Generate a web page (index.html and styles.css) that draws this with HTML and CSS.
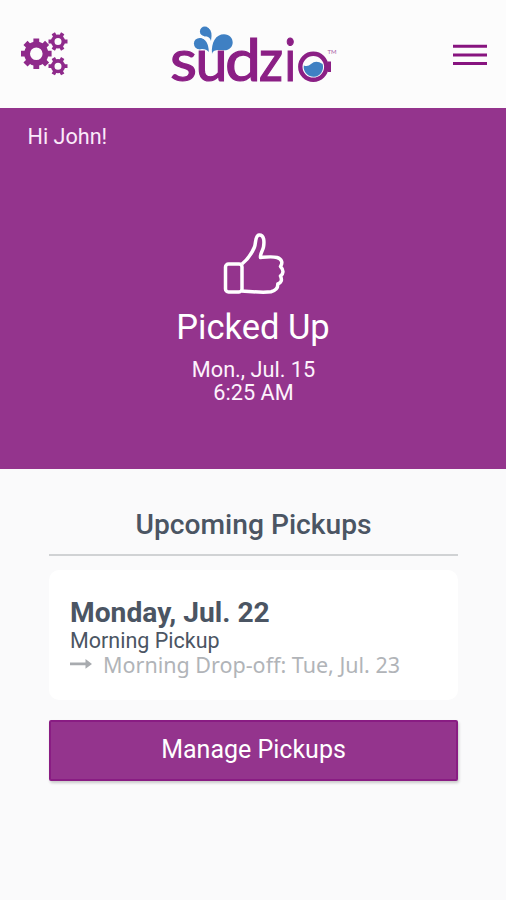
FILE: index.html
```html
<!DOCTYPE html>
<html lang="en">
<head>
<meta charset="utf-8">
<title>Sudzio</title>
<link rel="stylesheet" href="styles.css">
</head>
<body>
<header class="topbar">
  <svg class="gears" viewBox="0 0 50 46" aria-label="Settings">
    <defs>
      <g id="gear-large">
        <circle r="9.200" fill="none" stroke-width="5.800"/>
        <path d="M0-15.300V-10M0 15.300V10M-15.300 0H-10M15.300 0H10M-10.800-10.800L-7-7M10.800 10.800L7 7M-10.800 10.800L-7 7M10.800-10.800L7-7" stroke-width="5.800"/>
      </g>
      <g id="gear-small">
        <circle r="5.300" fill="none" stroke-width="3.600"/>
        <path d="M-9.500 0H-6M9.500 0H6M-4.700-8.200L-3-5.200M4.700 8.200L3 5.200M-4.700 8.200L-3 5.200M4.700-8.200L3-5.200" stroke-width="3.800"/>
      </g>
    </defs>
    <use href="#gear-large" x="16.3" y="23.7"/>
    <use href="#gear-small" x="38" y="11.5"/>
    <use href="#gear-small" x="38" y="36.2"/>
  </svg>
  <svg class="logo" viewBox="170 20 168 68" aria-label="sudzio">
    <g class="wordmark">
      <text x="170" y="81.300" textLength="27" lengthAdjust="spacingAndGlyphs">s</text>
      <text x="195.500" y="81.300" textLength="32" lengthAdjust="spacingAndGlyphs">u</text>
      <text x="225" y="81.300" textLength="36" lengthAdjust="spacingAndGlyphs">d</text>
      <text x="259" y="81.300" textLength="24" lengthAdjust="spacingAndGlyphs">z</text>
      <text x="284.500" y="81.300" textLength="11.500" lengthAdjust="spacingAndGlyphs">i</text>
    </g>
    <g class="water">
      <circle cx="204.800" cy="31.400" r="4.900"/>
      <path d="M208 27.800Q213 31 211 41Q210 36 204 36.200Z"/>
      <circle cx="199.600" cy="43.600" r="5.700"/>
      <path d="M200 38Q208.500 39 208.800 52Q206 48 199 49.200Z"/>
      <path d="M212 54C211 42 216 34.200 224 34.200C229.500 34.200 232.700 38 232.700 42.500C232.700 47 229 50.500 224 50.300C218 50 213.500 49 212 54Z"/>
    </g>
    <circle cx="313.300" cy="66.800" r="13" fill="none" stroke="#8b1f85" stroke-width="4.400"/>
    <path d="M327.500 61.500H331V72H327.500Z" fill="#8b1f85"/>
    <path class="water" d="M303.800 65.500Q308 67 311 64Q316 59.500 322.600 64A9.700 9.700 0 1 1 303.800 65.500Z"/>
    <text class="tm" x="327.500" y="54">TM</text>
  </svg>
  <svg class="menu" viewBox="0 0 34 22" aria-label="Menu">
    <path d="M0 2.300H34M0 11H34M0 19.400H34"/>
  </svg>
</header>
<section class="status">
  <p class="greeting">Hi John!</p>
  <svg class="thumb" viewBox="0 0 62 64">
    <rect x="2.500" y="32" width="16.500" height="28" rx="3"/>
    <path d="M19 32C24 28 29 21 31.500 15C33 11 32 3.500 36 3C41 2.500 41.500 9 40.500 15C39.800 19 37 21 37.500 25.500C43 25 49 24.200 54 25.500C59 27 60 31 57.500 34.500C61 38 60.500 42 57.500 44C59.500 48 58 51 54.800 52C55 56 52.500 58.500 48 59.700C39 61 28 59.500 19 59"/>
  </svg>
  <h1 class="state">Picked Up</h1>
  <p class="when"><span class="day">Mon., Jul. 15</span><span class="time">6:25 AM</span></p>
</section>
<main class="upcoming">
  <h2 class="heading"><span>Upcoming Pickups</span></h2>
  <article class="card">
    <h3 class="date"><span>Monday, Jul. 22</span></h3>
    <p class="slot"><span>Morning Pickup</span></p>
    <p class="dropoff">
      <svg class="arrow" viewBox="0 0 22 12"><path d="M0 4.500H15.500V1L22 5.900L15.500 10.800V7.300H0Z"/></svg>
      <span>Morning Drop-off: Tue, Jul. 23</span>
    </p>
  </article>
  <button class="manage">Manage Pickups</button>
</main>
</body>
</html>
```
FILE: styles.css
```css
* { box-sizing: border-box; }
body {
  margin: 0;
  min-height: 900px;
  background: #fafafb;
  color: #4b5563;
  font-family: Roboto, "Liberation Sans", sans-serif;
}
h1, h2, h3, p { margin: 0; font-weight: 400; }
svg { display: block; }
.topbar {
  height: 108px;
  padding: 20px 19px 0 20px;
  display: grid;
  grid-template-columns: 150px 168px 1fr;
  background: #fcfcfc;
}
.gears { width: 50px; height: 46px; margin-top: 10px; stroke: #8f2a8b; }
.logo { width: 168px; height: 68px; overflow: visible; }
.wordmark { font-family: Lato, sans-serif; font-size: 58px; fill: #8b1f85; stroke: #8b1f85; stroke-width: 1.2; }
.water { fill: #3f80c3; }
.tm { font: 6px Lato, sans-serif; fill: #a85aa5; }
.menu { width: 34px; height: 22px; margin-top: 24px; justify-self: end; stroke: #87147f; stroke-width: 3; }
.status {
  height: 361px;
  display: flex;
  flex-direction: column;
  align-items: center;
  background: #94348d;
  color: #fff;
}
.greeting { align-self: flex-start; padding: 15px 0 0 27.5px; font-size: 21.6px; line-height: 28px; color: #fbeafa; }
.thumb {
  width: 62px;
  height: 64px;
  margin: 81px 0 0 1px;
  fill: none;
  stroke: #fff;
  stroke-width: 3.5;
  stroke-linejoin: round;
}
.state { margin-top: 10px; font-size: 34.5px; line-height: 42px; }
.when { display: flex; flex-direction: column; align-items: center; margin-top: 10px; padding-left: 1px; font-size: 21.7px; line-height: 23px; color: #fdf2fc; }
.upcoming { padding: 36px 48px 0 49px; }
.heading {
  height: 51px;
  border-bottom: 2px solid #d0d2d4;
  font-size: 28.2px;
  line-height: 39px;
  font-weight: 500;
  text-align: center;
}
.card {
  height: 130px;
  margin-top: 14px;
  padding: 26px 21px 0;
  border-radius: 10px;
  background: #fff;
}
.date { font-size: 28.2px; line-height: 33px; font-weight: 700; }
.slot { font-size: 21.5px; line-height: 24px; }
.dropoff { display: flex; align-items: center; gap: 11px; font-family: "Noto Sans", sans-serif; font-size: 21.5px; line-height: 24px; color: #b1b4b8; }
.arrow { width: 22px; height: 12px; margin-top: -2px; fill: #a8abaf; }
.manage {
  display: block;
  width: 100%;
  height: 61px;
  margin-top: 20px;
  padding: 0 0 3px;
  border: 2px solid #891c83;
  border-radius: 2px;
  background: #94348d;
  box-shadow: 1px 2px 3px #0003;
  color: #fff;
  font: 400 25px Roboto, sans-serif;
}
```
